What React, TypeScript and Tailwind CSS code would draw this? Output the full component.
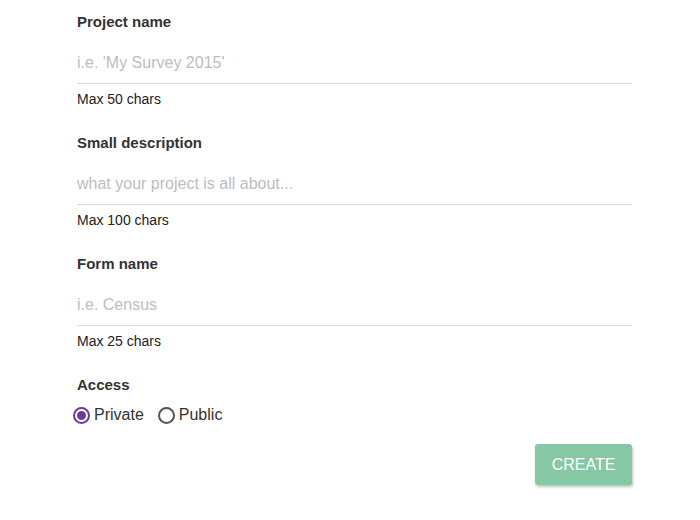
import React from "react";

const Field = ({ label, placeholder, hint }: { label: string; placeholder: string; hint: string }) => {
  return (
    <div className="flex flex-col mb-[26px]">
      <label className="text-[15px] leading-[20px] font-bold text-[#333]">{label}</label>
      <input
        placeholder={placeholder}
        className="mt-[11px] h-[41px] border-b border-[#dddddd] outline-none text-[16px] text-[#333] placeholder:text-[#bdbdbd] bg-transparent"
      />
      <span className="mt-[7px] text-[14px] leading-[16px] text-[#222]">{hint}</span>
    </div>
  );
};

const App = () => {
  const [access, setAccess] = React.useState("private");
  return (
    <div className="w-[700px] h-[520px] bg-white" style={{ fontFamily: '"Liberation Sans", Arial, sans-serif' }}>
      <div className="ml-[77px] w-[555px] pt-[12px] flex flex-col">
        <Field label="Project name" placeholder="i.e. 'My Survey 2015'" hint="Max 50 chars" />
        <Field label="Small description" placeholder="what your project is all about..." hint="Max 100 chars" />
        <Field label="Form name" placeholder="i.e. Census" hint="Max 25 chars" />
        <span className="text-[15px] leading-[20px] font-bold text-[#333]">Access</span>
        <div className="flex items-center mt-[8px] -ml-[4px] text-[16px] text-[#333]">
          <button onClick={() => setAccess("private")} className="flex items-center gap-[4px]">
            <span className="w-[17px] h-[17px] rounded-full border-2 border-[#6a3d9a] flex items-center justify-center">
              {access === "private" && <span className="w-[9px] h-[9px] rounded-full bg-[#6a3d9a]" />}
            </span>
            Private
          </button>
          <button onClick={() => setAccess("public")} className="flex items-center gap-[4px] ml-[14px]">
            <span className={"w-[17px] h-[17px] rounded-full border-2 flex items-center justify-center " + (access === "public" ? "border-[#6a3d9a]" : "border-[#555]")}>
              {access === "public" && <span className="w-[9px] h-[9px] rounded-full bg-[#6a3d9a]" />}
            </span>
            Public
          </button>
        </div>
        <div className="flex justify-end mt-[17px]">
          <button className="w-[97px] h-[41px] rounded-[3px] bg-[#87c8a4] text-white text-[16px] shadow-[1px_2px_3px_rgba(0,0,0,0.25)]">
            CREATE
          </button>
        </div>
      </div>
    </div>
  );
};

export default App;
